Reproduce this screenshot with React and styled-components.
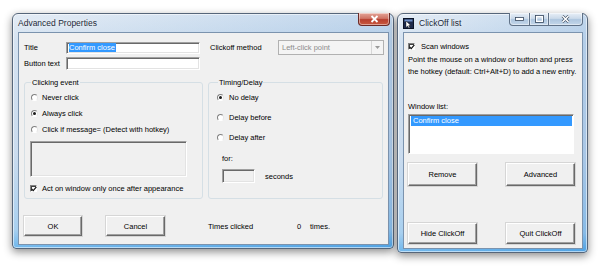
import styled, { createGlobalStyle } from "styled-components";

const Global = createGlobalStyle`
  html, body { margin: 0; padding: 0; background: #fff; }
  body {
    font-family: "Liberation Sans", Arial, sans-serif;
    font-size: 7.5px;
    color: #000;
  }
`;

const Desktop = styled.div`
  position: relative;
  width: 600px;
  height: 266px;
  overflow: hidden;
  background: #fff;
`;

const Window = styled.div`
  position: absolute;
  left: ${(p) => p.$x}px;
  top: ${(p) => p.$y}px;
  width: ${(p) => p.$w}px;
  height: ${(p) => p.$h}px;
  box-sizing: border-box;
  display: flex;
  flex-direction: column;
  padding: 0 4px 3px 5px;
  border: 1px solid #56667a;
  border-radius: 6px 6px 4px 4px;
  background:
    linear-gradient(90deg, rgba(255, 255, 255, 0.25), rgba(120, 170, 220, 0.25)),
    linear-gradient(180deg, #dbe6f2 0%, #c7d9ec 12%, #b9d0e9 60%, #8cc0ea 92%, #3f9fe6 100%);
  box-shadow: 0 3px 9px rgba(0, 0, 0, 0.45), inset 0 0 0 1px rgba(255, 255, 255, 0.55);
`;

const TitleBar = styled.div`
  height: 18px;
  flex: none;
  display: flex;
  align-items: center;
  gap: 5px;
`;

const TitleText = styled.span`
  font-size: 8.5px;
  color: #1e2a38;
  text-shadow: 0 0 4px rgba(255, 255, 255, 0.9);
  margin-left: ${(p) => p.$ml || 0}px;
`;

const CaptionButtons = styled.div`
  margin-left: auto;
  align-self: flex-start;
  margin-top: -1px;
  margin-right: ${(p) => p.$mr || 0}px;
  display: flex;
`;

const CaptionButton = styled.div`
  width: ${(p) => p.$w}px;
  height: 13px;
  box-sizing: border-box;
  display: grid;
  place-items: center;
  border: 1px solid ${(p) => (p.$red ? "#6b2a26" : "#5f7187")};
  border-top: none;
  margin-left: -1px;
  background: ${(p) =>
    p.$red
      ? "linear-gradient(180deg, #e4a497 0%, #cf7465 45%, #b8402f 55%, #c9593f 100%)"
      : "linear-gradient(180deg, #e8eff7 0%, #cbdaea 45%, #aec6df 55%, #c4d7ea 100%)"};
  border-radius: ${(p) => p.$r || "0"};
  box-shadow: inset 0 0 0 1px rgba(255, 255, 255, 0.45);
`;

const Client = styled.div`
  flex: 1;
  display: flex;
  flex-direction: column;
  background: #f0f0f0;
  border: 1px solid #7b93ae;
  padding: ${(p) => p.$pad};
`;

const FormGrid = styled.div`
  display: grid;
  grid-template-columns: 42px 134px 10px 68px 106px;
  grid-template-rows: 15px 13px;
  row-gap: 2px;
  align-items: center;
`;

const Label = styled.span`
  grid-column: ${(p) => p.$col};
  grid-row: ${(p) => p.$row};
  white-space: nowrap;
`;

const TextBox = styled.div`
  grid-column: ${(p) => p.$col || "auto"};
  grid-row: ${(p) => p.$row || "auto"};
  width: ${(p) => (p.$w ? `${p.$w}px` : "auto")};
  height: ${(p) => p.$h}px;
  box-sizing: border-box;
  background: ${(p) => (p.$grey ? "#f0f0f0" : "#fff")};
  border: 1px solid;
  border-color: #a0a0a0 #fff #fff #a0a0a0;
  box-shadow: inset 1px 1px 0 #696969, inset -1px -1px 0 #e3e3e3;
  display: flex;
  align-items: center;
  padding-left: 2px;
  margin-top: ${(p) => p.$mt || 0}px;
`;

const Selected = styled.span`
  background: #3399ff;
  color: #fff;
  line-height: 9px;
  padding: 0 1px 0 0;
`;

const Select = styled.div`
  grid-column: 5;
  grid-row: 1;
  height: 15px;
  box-sizing: border-box;
  border: 1px solid #b1b1b1;
  background: #f4f4f4;
  color: #8d8d8d;
  display: flex;
  align-items: center;
  padding-left: 3px;
`;

const SelectArrow = styled.span`
  margin-left: auto;
  width: 11px;
  height: 13px;
  display: grid;
  place-items: center;
  border-left: 1px solid #d6d6d6;
`;

const GroupRow = styled.div`
  display: grid;
  grid-template-columns: 179px 175px;
  column-gap: 5px;
  margin-top: 8px;
`;

const Group = styled.fieldset`
  margin: 0;
  height: 121px;
  box-sizing: border-box;
  border: 1px solid #d5dfe5;
  border-radius: 3px;
  padding: ${(p) => p.$pad};
  min-width: 0;
`;

const Legend = styled.legend`
  padding: 0 1px;
  margin-left: 1px;
  line-height: 9px;
`;

const OptionRow = styled.div`
  height: ${(p) => p.$h}px;
  display: flex;
  align-items: center;
  gap: ${(p) => p.$gap || 4}px;
  padding-left: ${(p) => p.$pl || 0}px;
  margin-top: ${(p) => p.$mt || 0}px;
  white-space: nowrap;
`;

const RadioDot = styled.span`
  width: 7px;
  height: 7px;
  flex: none;
  box-sizing: border-box;
  border-radius: 50%;
  border: 1px solid;
  border-color: #808080 #e6e6e6 #fff #808080;
  background: #fff;
  display: grid;
  place-items: center;
  &::after {
    content: "";
    width: 3px;
    height: 3px;
    border-radius: 50%;
    background: ${(p) => (p.$on ? "#1b1b1b" : "transparent")};
  }
`;

const CheckBox = styled.span`
  width: 7px;
  height: 7px;
  flex: none;
  box-sizing: border-box;
  border: 1px solid;
  border-color: #808080 #fff #fff #808080;
  box-shadow: inset 1px 1px 0 #404040;
  background: #fff;
  display: grid;
  place-items: center;
`;

const BottomRow = styled.div`
  display: flex;
  align-items: center;
  margin-top: 17px;
`;

const Button = styled.div`
  width: ${(p) => p.$w}px;
  height: ${(p) => p.$h}px;
  margin-left: ${(p) => p.$ml || 0}px;
  box-sizing: border-box;
  display: grid;
  place-items: center;
  background: #f0f0f0;
  border: 1px solid;
  border-color: #fff #696969 #696969 #fff;
  box-shadow: inset -1px -1px 0 #a0a0a0, 0 0 0 1px #d6d6d6;
`;

const Counter = styled.div`
  margin-left: 43px;
  display: grid;
  grid-template-columns: 89px 13px auto;
`;

const Paragraph = styled.p`
  margin: 3px 0 0;
  line-height: 12px;
  white-space: nowrap;
`;

const ListBox = styled.div`
  width: 166px;
  height: 40px;
  margin-top: 3px;
  box-sizing: border-box;
  background: #fff;
  border: 1px solid;
  border-color: #a0a0a0 #fff #fff #a0a0a0;
  box-shadow: inset 1px 1px 0 #696969;
  padding: 1px 1px 0 2px;
`;

const ListItem = styled.div`
  height: 10px;
  line-height: 10px;
  padding-left: 2px;
  background: ${(p) => (p.$sel ? "#3399ff" : "transparent")};
  color: ${(p) => (p.$sel ? "#fff" : "#000")};
`;

const ButtonPair = styled.div`
  display: flex;
  justify-content: space-between;
  margin-top: ${(p) => p.$mt}px;
`;

const Check = () => (
  <svg width="6" height="6" viewBox="0 0 6 6">
    <path d="M0.6 2.8 L2.2 4.6 L5.4 0.9" fill="none" stroke="#111" strokeWidth="1.2" />
  </svg>
);

const CloseGlyph = () => (
  <svg width="9" height="8" viewBox="0 0 9 8">
    <path d="M1.5 1 L7.5 7 M7.5 1 L1.5 7" stroke="#fff" strokeWidth="1.8" />
  </svg>
);

const AppIcon = () => (
  <svg width="11" height="11" viewBox="0 0 11 11">
    <rect x="0.5" y="0.5" width="10" height="10" fill="#1d2b4d" stroke="#0b1326" />
    <rect x="1.5" y="1.5" width="8" height="2" fill="#6f8fc8" />
    <path d="M3 3 L3 9.5 L4.6 8 L5.8 10.2 L6.8 9.7 L5.7 7.6 L7.8 7.5 Z" fill="#fff" stroke="#000" strokeWidth="0.4" />
  </svg>
);

export default function App() {
  return (
    <>
      <Global />
      <Desktop>
        <Window $x={12} $y={13} $w={382} $h={236}>
          <TitleBar>
            <TitleText>Advanced Properties</TitleText>
            <CaptionButtons $mr={-1}>
              <CaptionButton $w={32} $red $r="0 0 4px 4px">
                <CloseGlyph />
              </CaptionButton>
            </CaptionButtons>
          </TitleBar>
          <Client $pad="7px 4px 0 5px">
            <FormGrid>
              <Label $col={1} $row={1}>Title</Label>
              <TextBox $col={2} $row={1} $h={12}>
                <Selected>Confirm close</Selected>
              </TextBox>
              <Label $col={4} $row={1}>Clickoff method</Label>
              <Select>
                Left-click point
                <SelectArrow>
                  <svg width="5" height="3" viewBox="0 0 5 3">
                    <path d="M0 0 H5 L2.5 3 Z" fill="#9a9a9a" />
                  </svg>
                </SelectArrow>
              </Select>
              <Label $col={1} $row={2}>Button text</Label>
              <TextBox $col={2} $row={2} $h={13} />
            </FormGrid>

            <GroupRow>
              <Group $pad="2px 5px 0 5px">
                <Legend>Clicking event</Legend>
                <OptionRow $h={16} $pl={1}>
                  <RadioDot />
                  Never click
                </OptionRow>
                <OptionRow $h={16} $pl={1}>
                  <RadioDot $on />
                  Always click
                </OptionRow>
                <OptionRow $h={16} $pl={1}>
                  <RadioDot />
                  Click if message= (Detect with hotkey)
                </OptionRow>
                <TextBox $w={157} $h={36} $grey $mt={4} />
                <OptionRow $h={12} $pl={0} $gap={5} $mt={5}>
                  <CheckBox>
                    <Check />
                  </CheckBox>
                  Act on window only once after appearance
                </OptionRow>
              </Group>
              <Group $pad="0 5px 0 8px">
                <Legend>Timing/Delay</Legend>
                <OptionRow $h={20} $gap={5}>
                  <RadioDot $on />
                  No delay
                </OptionRow>
                <OptionRow $h={20} $gap={5}>
                  <RadioDot />
                  Delay before
                </OptionRow>
                <OptionRow $h={20} $gap={5}>
                  <RadioDot />
                  Delay after
                </OptionRow>
                <OptionRow $h={10} $pl={5} $mt={6}>
                  for:
                </OptionRow>
                <OptionRow $h={14} $pl={5} $gap={10} $mt={6}>
                  <TextBox $w={33} $h={14} $grey />
                  seconds
                </OptionRow>
              </Group>
            </GroupRow>

            <BottomRow>
              <Button $w={58} $h={20}>OK</Button>
              <Button $w={59} $h={20} $ml={24}>Cancel</Button>
              <Counter>
                <span>Times clicked</span>
                <span>0</span>
                <span>times.</span>
              </Counter>
            </BottomRow>
          </Client>
        </Window>

        <Window $x={397} $y={13} $w={191} $h={240}>
          <TitleBar>
            <AppIcon />
            <TitleText>ClickOff list</TitleText>
            <CaptionButtons>
              <CaptionButton $w={21} $r="0 0 0 4px">
                <svg width="9" height="4" viewBox="0 0 9 4">
                  <rect x="0.5" y="0.5" width="8" height="3" fill="#fff" stroke="#37475c" strokeWidth="0.8" />
                </svg>
              </CaptionButton>
              <CaptionButton $w={20}>
                <svg width="9" height="8" viewBox="0 0 9 8">
                  <rect x="0.5" y="0.5" width="8" height="7" fill="none" stroke="#37475c" strokeWidth="0.8" />
                  <rect x="1.6" y="1.6" width="5.8" height="4.8" fill="none" stroke="#fff" strokeWidth="1.2" />
                </svg>
              </CaptionButton>
              <CaptionButton $w={35} $r="0 0 4px 0">
                <svg width="9" height="8" viewBox="0 0 9 8">
                  <path d="M1.5 1 L7.5 7 M7.5 1 L1.5 7" stroke="#37475c" strokeWidth="2.6" />
                  <path d="M1.5 1 L7.5 7 M7.5 1 L1.5 7" stroke="#fff" strokeWidth="1.6" />
                </svg>
              </CaptionButton>
            </CaptionButtons>
          </TitleBar>
          <Client $pad="8px 7px 0 4px">
            <OptionRow $h={10} $gap={6}>
              <CheckBox>
                <Check />
              </CheckBox>
              Scan windows
            </OptionRow>
            <Paragraph>
              Point the mouse on a window or button and press
              <br />
              the hotkey (default: Ctrl+Alt+D) to add a new entry.
            </Paragraph>
            <OptionRow $h={10} $mt={23}>
              Window list:
            </OptionRow>
            <ListBox>
              <ListItem $sel>Confirm close</ListItem>
            </ListBox>
            <ButtonPair $mt={9}>
              <Button $w={69} $h={23}>Remove</Button>
              <Button $w={69} $h={23}>Advanced</Button>
            </ButtonPair>
            <ButtonPair $mt={37}>
              <Button $w={69} $h={21}>Hide ClickOff</Button>
              <Button $w={69} $h={21}>Quit ClickOff</Button>
            </ButtonPair>
          </Client>
        </Window>
      </Desktop>
    </>
  );
}
